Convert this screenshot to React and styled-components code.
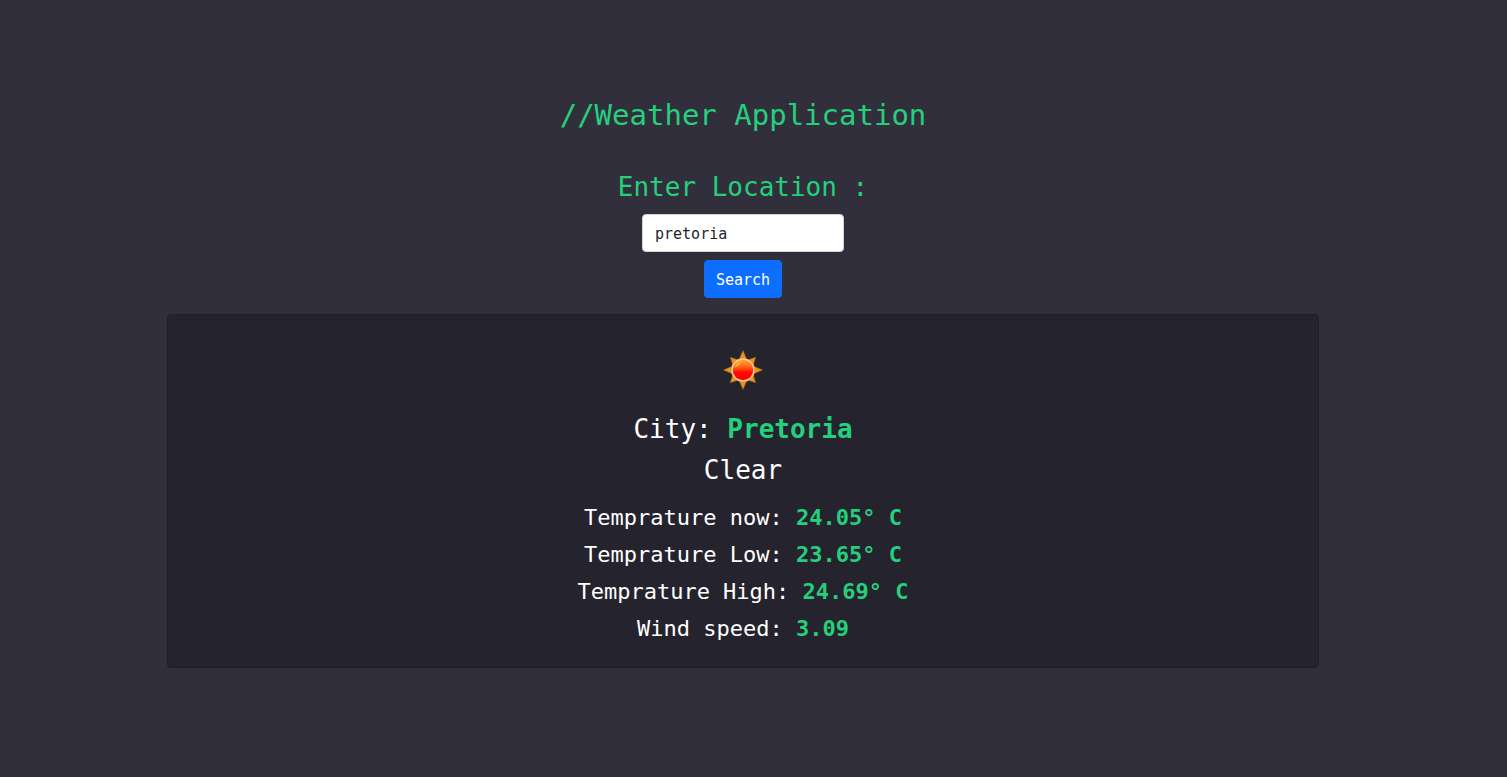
import React, { useState } from "react";
import styled, { createGlobalStyle } from "styled-components";

const GlobalStyle = createGlobalStyle`
  *, *::before, *::after { box-sizing: border-box; }
  body {
    margin: 0;
    background: #322f3c;
    color: #fff;
    font-family: Consolas, "DejaVu Sans Mono", monospace;
  }
`;

const Page = styled.main`
  display: flex;
  flex-direction: column;
  align-items: center;
  padding: 96px 21px 96px 0;
  text-align: center;
`;

const Title = styled.h1`
  margin: 0 0 38px;
  color: #25d07d;
  font-size: 29px;
  font-weight: 400;
  line-height: 38px;
`;

const SearchForm = styled.form`
  display: flex;
  flex-direction: column;
  align-items: center;
  gap: 8px;
  margin-bottom: 16px;
`;

const Label = styled.label`
  margin-bottom: 4px;
  color: #25d07d;
  font-size: 26px;
  line-height: 30px;
`;

const TextInput = styled.input`
  width: 202px;
  height: 38px;
  padding: 8px 12px 6px;
  border: 1px solid #ced4da;
  border-radius: 4px;
  background: #fff;
  color: #212529;
  font: inherit;
  font-size: 15px;
`;

const SearchButton = styled.button`
  height: 38px;
  padding: 8px 11px 6px;
  border: 1px solid #0d6efd;
  border-radius: 4px;
  background: #0d6efd;
  color: #fff;
  font: inherit;
  font-size: 15px;
`;

const Card = styled.section`
  display: flex;
  flex-direction: column;
  align-items: center;
  gap: 8px;
  width: 84%;
  max-width: 1152px;
  padding: 35px 16px 24px;
  border: 1px solid #201f28;
  border-radius: 4px;
  background: #25232d;
`;

const SunIcon = styled.svg`
  display: block;
  width: 40px;
  height: 40px;
  margin-bottom: 15px;
`;

const Heading = styled.h2`
  margin: 0;
  font-size: 26px;
  font-weight: 400;
  line-height: 33px;
`;

const Reading = styled.p`
  margin: 0;
  font-size: 22px;
  line-height: 29px;
`;

const Readings = styled.div`
  display: flex;
  flex-direction: column;
  gap: 8px;
  margin-top: 8px;
`;

const Value = styled.strong`
  color: #25d07d;
  font-weight: 700;
`;

const readings = [
  { label: "Temprature now", value: "24.05° C" },
  { label: "Temprature Low", value: "23.65° C" },
  { label: "Temprature High", value: "24.69° C" },
  { label: "Wind speed", value: "3.09" },
];

const rays = [0, 45, 90, 135, 180, 225, 270, 315];

function Sun() {
  return (
    <SunIcon viewBox="0 0 40 40" role="img" aria-label="Clear sky">
      <defs>
        <linearGradient id="disc" x1="0" y1="0" x2="0" y2="1">
          <stop offset="0" stopColor="#ffa628" />
          <stop offset="0.25" stopColor="#ff7a1c" />
          <stop offset="0.48" stopColor="#ff3a10" />
          <stop offset="0.6" stopColor="#ff0c04" />
          <stop offset="1" stopColor="#f80000" />
        </linearGradient>
      </defs>
      {rays.map((angle) => (
        <path
          key={angle}
          d={angle % 90 ? "M20 2 L24.5 11 H15.5 Z" : "M20 0.5 L24.5 11 H15.5 Z"}
          fill="#e8951f"
          stroke="#a8620f"
          strokeWidth="0.5"
          transform={`rotate(${angle} 20 20)`}
        />
      ))}
      <circle cx="20" cy="20" r="12" fill="#f1a544" />
      <circle cx="20" cy="20" r="11.2" fill="#f6cfae" />
      <circle cx="20" cy="20" r="10.2" fill="url(#disc)" />
      <path d="M11.5 18 Q13 11.5 19.5 11 Q16.5 13.5 15.5 15.5 Z" fill="#ffc23c" opacity="0.7" />
    </SunIcon>
  );
}

export default function App() {
  const [location, setLocation] = useState("pretoria");

  return (
    <>
      <GlobalStyle />
      <Page>
        <Title>//Weather Application</Title>
        <SearchForm onSubmit={(event) => event.preventDefault()}>
          <Label htmlFor="location">Enter Location :</Label>
          <TextInput
            id="location"
            type="text"
            value={location}
            onChange={(event) => setLocation(event.target.value)}
          />
          <SearchButton type="submit">Search</SearchButton>
        </SearchForm>
        <Card>
          <Sun />
          <Heading>
            City: <Value>Pretoria</Value>
          </Heading>
          <Heading as="h3">Clear</Heading>
          <Readings>
            {readings.map(({ label, value }) => (
              <Reading key={label}>
                {label}: <Value>{value}</Value>
              </Reading>
            ))}
          </Readings>
        </Card>
      </Page>
    </>
  );
}
